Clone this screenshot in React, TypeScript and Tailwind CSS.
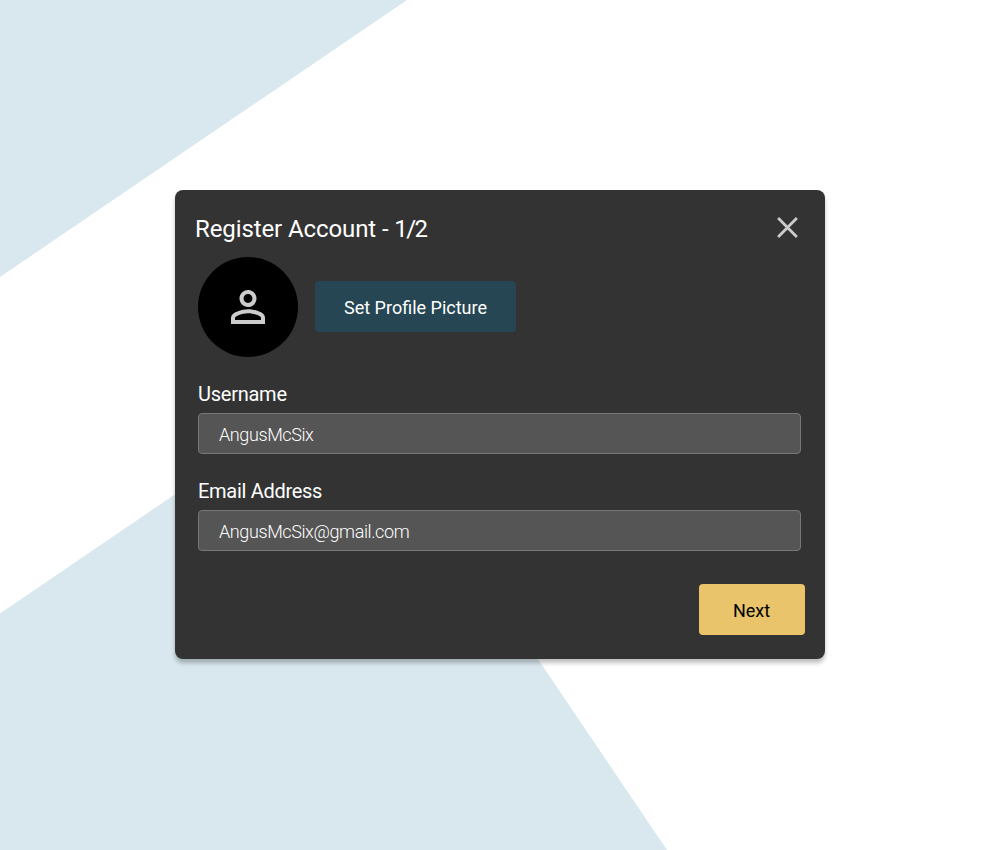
import React, { useState } from "react";

function Backdrop() {
  return (
    <svg className="absolute inset-0 h-full w-full" viewBox="0 0 1000 850" preserveAspectRatio="none" aria-hidden="true">
      <g fill="#d9e8ee">
        <path d="M0 0H407L0 277Z" />
        <path d="M0 613.5L347.3 377L667 850H0Z" />
      </g>
    </svg>
  );
}

function PersonIcon() {
  return (
    <svg width="52" height="52" viewBox="-0.235 -0.235 24.47 24.47" fill="#cccccc" aria-hidden="true">
      <path d="M12 5.9c1.16 0 2.1.94 2.1 2.1s-.94 2.1-2.1 2.1S9.9 9.16 9.9 8s.94-2.1 2.1-2.1m0 9c2.97 0 6.1 1.46 6.1 2.1v1.1H5.9V17c0-.64 3.13-2.1 6.1-2.1M12 4C9.79 4 8 5.79 8 8s1.79 4 4 4 4-1.79 4-4-1.79-4-4-4zm0 9c-2.67 0-8 1.34-8 4v3h16v-3c0-2.66-5.33-4-8-4z" />
    </svg>
  );
}

function CloseIcon() {
  return (
    <svg width="21" height="21" viewBox="0 0 21 21" fill="none" stroke="#cccccc" strokeWidth="2.8" aria-hidden="true">
      <path d="M1.1 1.1L19.9 19.9M19.9 1.1L1.1 19.9" />
    </svg>
  );
}

type FieldProps = {
  label: string;
  type: string;
  initial: string;
  labelClass: string;
  inputClass: string;
};

function Field({ label, type, initial, labelClass, inputClass }: FieldProps) {
  const [value, setValue] = useState(initial);
  return (
    <label className="block">
      <span className={`block h-7 text-[20px] leading-7 font-normal ${labelClass}`}>{label}</span>
      <input
        type={type}
        value={value}
        spellCheck={false}
        onChange={(e) => setValue(e.target.value)}
        className={`mt-[5px] block h-[41px] w-full rounded-[4px] border border-[#777777] bg-[#555555] px-5 pt-px text-[18px] font-light text-white outline-none ${inputClass}`}
      />
    </label>
  );
}

export default function App() {
  return (
    <main className="relative flex h-[850px] w-full justify-center overflow-hidden bg-white pt-[190px] font-[Roboto,sans-serif]">
      <Backdrop />
      <section className="relative flex h-[469px] w-[650px] flex-col rounded-[8px] bg-[#333333] pr-5 pl-[23px] text-white shadow-[0_4px_4px_rgba(0,0,0,0.25)]">
        <header className="flex h-[67px] items-start justify-between pt-[23px] pr-[7px]">
          <h1 className="-ml-[3px] text-[24px] leading-8 font-normal tracking-[-0.1px]">
            Register Account - <span className="tracking-[-1.6px]">1/2</span>
          </h1>
          <button type="button" aria-label="Close" className="mt-1">
            <CloseIcon />
          </button>
        </header>
        <div className="flex items-center gap-[17px]">
          <div className="flex size-[100px] items-center justify-center rounded-full bg-black">
            <PersonIcon />
          </div>
          <button type="button" className="mt-[-1px] h-[51px] w-[201px] rounded-[4px] bg-[#264653] pt-px text-[18px] font-normal">
            Set Profile Picture
          </button>
        </div>
        <div className="mt-[23px] flex flex-col gap-[23px] pr-1">
          <Field label="Username" type="text" initial="AngusMcSix" labelClass="tracking-[-0.25px]" inputClass="tracking-[-0.4px]" />
          <Field label="Email Address" type="email" initial="AngusMcSix@gmail.com" labelClass="tracking-[-0.3px]" inputClass="tracking-[-0.4px]" />
        </div>
        <button type="button" className="mt-[33px] h-[51px] w-[106px] self-end rounded-[4px] bg-[#e9c46a] pt-px pr-px text-[18px] font-normal text-black">
          Next
        </button>
      </section>
    </main>
  );
}
